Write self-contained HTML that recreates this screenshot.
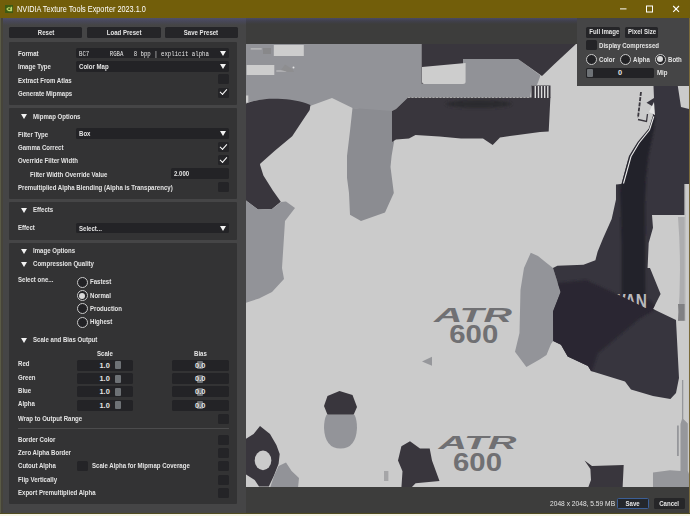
<!DOCTYPE html>
<html><head><meta charset="utf-8"><title>NVIDIA Texture Tools Exporter 2023.1.0</title>
<style>
*{box-sizing:border-box;margin:0;padding:0}
html,body{width:690px;height:516px;overflow:hidden;background:#725e0a}
body{position:relative;font-family:"Liberation Sans",sans-serif;font-size:7.4px;color:#e4e4e4;font-weight:bold}
.abs{position:absolute}
#title{left:0;top:0;width:690px;height:17.500px;background:#725e0a}
#title .t{left:17.200px;top:4.200px;font-size:8.6px;font-weight:normal;color:#fff;line-height:11px;white-space:nowrap;transform:scaleX(.85);transform-origin:0 50%}
#left{left:1px;top:17.500px;width:245px;height:497px;background:linear-gradient(#505068,#48485a 3px,#454546 7px)}
#right{left:246px;top:17.500px;width:444px;height:497px;background:linear-gradient(#4a4a62,#40404c 3px,#3d3d3c 6px)}
.panel{background:#333334;left:9.200px;width:228px;border-radius:1px}
.btn{background:#252528;border-radius:1.5px;text-align:center;line-height:11px;height:11px;top:27px;white-space:nowrap}
.lbl{white-space:nowrap;line-height:10px;height:10px;margin-top:-4.500px;transform:scaleX(.82);transform-origin:0 50%}
.tx{display:inline-block;transform:scaleX(.82);transform-origin:0 50%}
.tc{display:inline-block;transform:scaleX(.82);transform-origin:50% 50%}
.dd{background:#232326;border-radius:1.5px;left:76px;width:153px;height:10.600px;margin-top:-4.800px;line-height:12.200px;padding-left:3px;white-space:nowrap}
.dd.nd:after{display:none}
.dd:after{content:"";position:absolute;right:3.5px;top:3px;border-left:3px solid transparent;border-right:3px solid transparent;border-top:5px solid #f2f2f2}
.cb{background:#242427;border-radius:1.5px;width:11px;height:10px;margin-top:-4.500px;left:218px}
.cb.on:after{content:"";position:absolute;left:2.300px;top:1.800px;width:6px;height:3.200px;border-left:1.800px solid #fff;border-bottom:1.800px solid #fff;transform:rotate(-48deg)}
.tri{width:0;height:0;border-left:3px solid transparent;border-right:3px solid transparent;border-top:5px solid #f2f2f2;left:21px;margin-top:-2px}
.rd{width:11px;height:11px;border-radius:50%;background:#222225;border:1px solid #c9c9c9;margin-top:-5px;margin-left:-.5px}
.rd.on:after{content:"";position:absolute;left:1.500px;top:1.500px;width:6px;height:6px;border-radius:50%;background:#d8d8d8}
.sl{background:#232326;border-radius:1.5px;height:11px;margin-top:-5px;width:56.500px}
.sl i{position:absolute;top:1.500px;width:6px;height:8px;background:#6e7276;border-radius:1px}
.sl b{position:absolute;top:0;line-height:11px;font-weight:bold}
.mono{font-family:"Liberation Mono",monospace;font-weight:normal;font-size:6.800px;transform:scaleX(.838)}
</style></head><body>
<div id="title" class="abs">
 <svg class="abs" style="left:5.300px;top:5.400px" width="8" height="8" viewBox="0 0 9 9"><rect width="9" height="9" fill="#3d5a12"/><path d="M1.5 4.5 C2.5 2.5 5 2.2 6.5 3.2 L6.5 2 L8 2 L8 7 L6.5 7 C4.5 7.5 2.5 6.5 1.5 4.5 Z M3 4.5 C3.8 5.6 5 5.8 6 5.3 L6 3.8 C5 3.3 3.8 3.5 3 4.5Z" fill="#b9d66a" fill-rule="evenodd"/></svg>
 <div class="abs t">NVIDIA Texture Tools Exporter 2023.1.0</div>
 <svg class="abs" style="left:610px;top:0" width="80" height="18" viewBox="0 0 80 18"><path d="M10 8.900h6.500" stroke="#fff" stroke-width="1"/><rect x="36.500" y="6" width="6" height="6" fill="none" stroke="#fff" stroke-width="1"/><path d="M63.200 6l5.800 5.800M69 6l-5.800 5.800" stroke="#fff" stroke-width="1.100"/></svg>
</div>
<div id="left" class="abs"></div>
<div id="right" class="abs"></div>
<!--LEFT-->
<div class="abs btn" style="left:9.2px;width:72.8px"><span class="tc">Reset</span></div>
<div class="abs btn" style="left:87px;width:73.5px"><span class="tc">Load Preset</span></div>
<div class="abs btn" style="left:165px;width:72.69999999999999px"><span class="tc">Save Preset</span></div>
<div class="abs panel" style="top:41.5px;height:63.2px"></div>
<div class="abs lbl" style="left:18px;top:53px">Format</div>
<div class="abs dd" style="top:52.7px"><span class="tx mono">BC7&nbsp;&nbsp;&nbsp;&nbsp;&nbsp;&nbsp;RGBA&nbsp;&nbsp;&nbsp;8 bpp | explicit alpha</span></div>
<div class="abs lbl" style="left:18px;top:66.3px">Image Type</div>
<div class="abs dd" style="top:66.2px"><span class="tx">Color Map</span></div>
<div class="abs lbl" style="left:18px;top:80px">Extract From Atlas</div>
<div class="abs cb" style="left:218px;top:78.4px"></div>
<div class="abs lbl" style="left:18px;top:93.3px">Generate Mipmaps</div>
<div class="abs cb on" style="left:218px;top:92.1px"></div>
<div class="abs panel" style="top:108.3px;height:90.7px"></div>
<div class="abs tri" style="top:116px"></div>
<div class="abs lbl" style="left:33px;top:116px">Mipmap Options</div>
<div class="abs lbl" style="left:18px;top:134px">Filter Type</div>
<div class="abs dd" style="top:133.2px"><span class="tx">Box</span></div>
<div class="abs lbl" style="left:18px;top:147.3px">Gamma Correct</div>
<div class="abs cb on" style="left:218px;top:146.5px"></div>
<div class="abs lbl" style="left:18px;top:160.7px">Override Filter Width</div>
<div class="abs cb on" style="left:218px;top:159.9px"></div>
<div class="abs lbl" style="left:30px;top:174.2px">Filter Width Override Value</div>
<div class="abs dd nd" style="left:170.500px;width:58.5px;top:172.9px"><span class="tx">2.000</span></div>
<div class="abs lbl" style="left:18px;top:187px">Premultiplied Alpha Blending (Alpha is Transparency)</div>
<div class="abs cb" style="left:218px;top:186.2px"></div>
<div class="abs panel" style="top:202px;height:38px"></div>
<div class="abs tri" style="top:209.7px"></div>
<div class="abs lbl" style="left:33px;top:209.7px">Effects</div>
<div class="abs lbl" style="left:18px;top:227px">Effect</div>
<div class="abs dd" style="top:227.3px"><span class="tx">Select...</span></div>
<div class="abs panel" style="top:243px;height:260.5px"></div>
<div class="abs tri" style="top:250.6px"></div>
<div class="abs lbl" style="left:33px;top:250.6px">Image Options</div>
<div class="abs tri" style="top:263.8px"></div>
<div class="abs lbl" style="left:33px;top:263.8px">Compression Quality</div>
<div class="abs lbl" style="left:18px;top:279.8px">Select one...</div>
<div class="abs rd" style="left:77px;top:281.5px"></div>
<div class="abs lbl" style="left:90px;top:281.5px">Fastest</div>
<div class="abs rd on" style="left:77px;top:295px"></div>
<div class="abs lbl" style="left:90px;top:295px">Normal</div>
<div class="abs rd" style="left:77px;top:308.2px"></div>
<div class="abs lbl" style="left:90px;top:308.2px">Production</div>
<div class="abs rd" style="left:77px;top:321.7px"></div>
<div class="abs lbl" style="left:90px;top:321.7px">Highest</div>
<div class="abs tri" style="top:339.8px"></div>
<div class="abs lbl" style="left:33px;top:339.8px">Scale and Bias Output</div>
<div class="abs lbl" style="left:96.9px;top:353.8px">Scale</div>
<div class="abs lbl" style="left:194.4px;top:353.8px">Bias</div>
<div class="abs lbl" style="left:18px;top:363.8px">Red</div>
<div class="abs sl" style="left:76.5px;top:364.8px"><i style="left:38px"></i><b style="left:23px">1.0</b></div>
<div class="abs sl" style="left:172.3px;top:364.8px"><i style="left:25px"></i><b style="left:22.8px">0.0</b></div>
<div class="abs lbl" style="left:18px;top:377px">Green</div>
<div class="abs sl" style="left:76.5px;top:378px"><i style="left:38px"></i><b style="left:23px">1.0</b></div>
<div class="abs sl" style="left:172.3px;top:378px"><i style="left:25px"></i><b style="left:22.8px">0.0</b></div>
<div class="abs lbl" style="left:18px;top:390.3px">Blue</div>
<div class="abs sl" style="left:76.5px;top:391.3px"><i style="left:38px"></i><b style="left:23px">1.0</b></div>
<div class="abs sl" style="left:172.3px;top:391.3px"><i style="left:25px"></i><b style="left:22.8px">0.0</b></div>
<div class="abs lbl" style="left:18px;top:403.5px">Alpha</div>
<div class="abs sl" style="left:76.5px;top:404.5px"><i style="left:38px"></i><b style="left:23px">1.0</b></div>
<div class="abs sl" style="left:172.3px;top:404.5px"><i style="left:25px"></i><b style="left:22.8px">0.0</b></div>
<div class="abs lbl" style="left:18px;top:418.4px">Wrap to Output Range</div>
<div class="abs cb" style="left:218px;top:418.4px"></div>
<div class="abs" style="left:18px;top:428px;width:211px;height:1px;background:#4c4c4d"></div>
<div class="abs lbl" style="left:18px;top:439px">Border Color</div>
<div class="abs cb" style="left:218px;top:439px"></div>
<div class="abs lbl" style="left:18px;top:452.4px">Zero Alpha Border</div>
<div class="abs cb" style="left:218px;top:452.4px"></div>
<div class="abs lbl" style="left:18px;top:465.6px">Cutout Alpha</div>
<div class="abs cb" style="left:76.5px;top:465.6px"></div>
<div class="abs lbl" style="left:92.3px;top:465.6px">Scale Alpha for Mipmap Coverage</div>
<div class="abs cb" style="left:218px;top:465.6px"></div>
<div class="abs lbl" style="left:18px;top:479px">Flip Vertically</div>
<div class="abs cb" style="left:218px;top:479px"></div>
<div class="abs lbl" style="left:18px;top:492.6px">Export Premultiplied Alpha</div>
<div class="abs cb" style="left:218px;top:492.6px"></div>
<!--/LEFT-->
<!--IMG-->
<svg class="abs" style="left:246.400px;top:44.300px" width="442.400" height="443.200" viewBox="0 0 442.400 443.200">
<defs><filter id="bl" x="-20%" y="-50%" width="140%" height="200%"><feGaussianBlur stdDeviation="1.5"/></filter><clipPath id="tri"><path d="M370,249.500H401.500V265Z"/></clipPath><filter id="bl2" x="-20%" y="-20%" width="140%" height="140%"><feGaussianBlur stdDeviation="1.2"/></filter><clipPath id="d4c"><path d="M407,30L408,54L400.500,58.700L406,62L407,71.700L402.700,84.800L391.800,97.800L383,112L375.500,140L370,140.500V155.500L365.700,175L357,194.600L351.600,207.700L349.400,216.300L337.500,220.700L311.400,221.800L307,224L314.600,248L307,267.500L307.200,297L315,300.700L321.700,312.400L342,322L345,327L379,337.600L385,345.500L407,352L424.400,355L430,349L433,334L430,276L407,265L414.600,250L404,224H401.600L402.700,199L407,183.700L406,171H438.500V140H443V65L435,63L430,30Z"/></clipPath></defs>
<rect width="443" height="444" fill="#cbcbcb"/>
<!-- top-left mid grey -->
<path d="M0,0H175.600V53.500H162L150,65L146,67V70L106.500,64L86,54L64,62Q32,50 0,58.700Z" fill="#929398"/>
<path d="M175,40H217V15H272L294.500,31.500L291,41H286L284,53.500H175Z" fill="#919297"/>
<!-- band -->
<path d="M106.500,64L146,67L148,98L145.600,112L144.500,123L147.800,149L139,168.500L115,177L104,170.700L103,149L101,133.700V112L104,87Z" fill="#8b8c91"/>
<!-- small details top-left -->
<rect x="27.800" y="1" width="30" height="11" fill="#cdcdcd"/>
<rect x="0.600" y="21" width="27.700" height="10" fill="#cdcdcd"/>
<rect x="17" y="4" width="8" height="6" fill="#88888a"/>
<rect x="30.300" y="26.500" width="10" height="1" fill="#c8c8c8"/><rect x="4.700" y="4.300" width="11" height="1.200" fill="#c0c0c0"/><path d="M35,26L39,20.500L47,25.500L48,28H42Z" fill="#8e8e90"/><circle cx="47.500" cy="23.500" r="1" fill="#e0e0e0"/><rect x="0" y="51.500" width="2.300" height="7" fill="#cdcdcd"/>
<!-- dark arc -->
<path d="M0,59.500C10,55.500 21,54.500 32,54.800S55,57 64.400,61L63.700,66L57.800,74.800L46.200,92.200L28.800,106.700L14.200,119.800L14,120.700L17.400,131.600L27,146.800L34.800,157.700L26,165L12,165.500L0,156.500Z" fill="#39363d"/>
<!-- left mid-grey shape -->
<path d="M0,156.500L12,165.500L26,165L35,158L40,157.600L49,164L39,177L36,224L38,235L26,248L13,254.400L0,258.800Z" fill="#929398"/>
<!-- dark top -->
<path d="M175.600,0H330L308,20.600L296,32L272,15H217V40H175.600Z" fill="#39363d"/>
<path d="M176,23L219.600,19V38Q219.600,40 217,40H178Q176,40 176,38Z" fill="#cdcdcd"/>
<!-- dark band -->
<path d="M162,53.500H304.400L302.700,87.500L294,88L271.700,91L254,93.500L246.700,101L237,94.500H215L193.500,92.400L169.500,91L163,94.500L150,95.600L146,98V67L150,65Z" fill="#39363d"/>
<ellipse cx="232.600" cy="60" rx="33" ry="4" fill="#2b2a2f" filter="url(#bl)"/>
<path d="M162,53.500H283" stroke="#b8b8b8" stroke-width="0.800" stroke-dasharray="2 1.500" fill="none"/>
<!-- barcode stripes -->
<rect x="285.500" y="41.500" width="19" height="12.500" fill="#39363d"/><g fill="#dcdcdc"><rect x="288.600" y="42" width="1.400" height="12"/><rect x="291.800" y="42" width="1.400" height="12"/><rect x="294.900" y="42" width="1.400" height="12"/><rect x="298" y="42" width="1.400" height="12"/><rect x="301.100" y="42" width="1.400" height="12"/></g>
<!-- center-right mid grey -->
<path d="M284.800,208.700L292,212L300,218.500L307,224L314.600,248L307,267.500L308,295.700L305,300L300.500,311L294,315.300L280.400,323L269,307.700L273.500,289L274.500,245.700L278,224Z" fill="#939499"/>
<!-- big dark right -->
<path d="M407,30L408,54L400.500,58.700L406,62L407,71.700L402.700,84.800L391.800,97.800L383,112L375.500,140L370,140.500V155.500L365.700,175L357,194.600L351.600,207.700L349.400,216.300L337.500,220.700L311.400,221.800L307,224L314.600,248L307,267.500L307.200,297L315,300.700L321.700,312.400L342,322L345,327L379,337.600L385,345.500L407,352L424.400,355L430,349L433,334L430,276L407,265L414.600,250L404,224H401.600L402.700,199L407,183.700L406,171H438.500V140H443V65L435,63L430,30Z" fill="#37353e"/>
<g clip-path="url(#d4c)"><g filter="url(#bl2)"><path d="M407,70L409,74L407.500,88L402.500,111.300L400,134.500L399,161.500L399.500,258H375.600V200L374,140L379.900,120.600L389.200,102L403.100,85.700Z" fill="#24222a"/><path d="M300,240L340,236L375,252L403,256L412,264L393.600,274.600L351.700,309.500L345,330L300,310Z" fill="#2a2831"/></g></g>
<path d="M407.800,72.500L403.500,86L393,99L385,112.500L377.500,139.500" stroke="#ececec" stroke-width="1.100" fill="none"/>
<path d="M395,48L392,74" stroke="#39363d" stroke-width="1.800" stroke-dasharray="4 1.200" fill="none"/>
<path d="M392,75.500L400.500,77.500L401.500,70" stroke="#39363d" stroke-width="1.300" fill="none"/>
<path d="M403,68L408,58L409,71Z" fill="#e4e4e4"/>
<g clip-path="url(#tri)"><text x="365" y="264.300" font-family="'Liberation Sans',sans-serif" font-weight="bold" font-size="20" fill="#b9b9bd" textLength="36" lengthAdjust="spacingAndGlyphs">WAN</text></g>
<path d="M432,173Q436,225 432,276.700H438.800V173Z" fill="#adadaf"/>
<path d="M432,260Q433,268 432,276.700H438.800V260Z" fill="#808083"/>
<path d="M438.800,140h1v137h-1z" fill="#bdbdbd"/>
<!-- ATR text -->
<g fill="#707073" font-family="'Liberation Sans',sans-serif" font-weight="bold">
<text x="188" y="278.300" font-size="19.500" font-style="italic" textLength="78" lengthAdjust="spacingAndGlyphs">ATR</text>
<text x="203.300" y="299" font-size="25.800" textLength="49" lengthAdjust="spacingAndGlyphs">600</text>
<text x="192.400" y="405.300" font-size="18.500" font-style="italic" textLength="78" lengthAdjust="spacingAndGlyphs">ATR</text>
<text x="207" y="427" font-size="26.500" textLength="49" lengthAdjust="spacingAndGlyphs">600</text>
</g>
<path d="M176,317.500L186,312.700V321.800Z" fill="#96979b"/>
<!-- bottom row -->
<path d="M78,362L81.500,352L93.500,347L106.500,351L111,363L107.600,370.800H81.500Z" fill="#39363d"/>
<path d="M80.500,370.800H108.500Q111,376 111,384Q110,404.500 94.500,404.500Q79,404.500 78,384Q78,376 80.500,370.800Z" fill="#939499"/>
<path d="M0,394.700L7.600,390L14,382L24,390L30.400,401L33.700,410L32.600,419.700L28,431.600L22.800,442.500H13L8.700,436L0,430.500Z" fill="#39363d"/>
<ellipse cx="17" cy="416.400" rx="8.300" ry="9.800" fill="#cbcbcb"/>
<path d="M32.600,422L40,418.600L45.600,427L53,434L52,444H24L28,432Z" fill="#929398"/>
<rect x="138" y="427" width="4.400" height="10" fill="#a5a5a7"/>
<path d="M152,416.400L155.400,402.300L164,397.300L174,404.500H183.700L186,416.400L193.500,437L169.600,439.300L165,444H155.400L156.500,427.300Z" fill="#39363d"/>
<path d="M338.600,416.400L346,422L377.700,421L376.600,444H342L345,436L344.400,425Z" fill="#39363d"/>
<!-- antenna -->
<path d="M436,336H437.300V375L441.800,379.500V427L443,430V444H407V428.500L424,426.300L434.500,427V412H432.800V381.600H431V412H434.500V380L436,375Z" fill="#96979b"/>
</svg>
<!--/IMG-->
<!--OVL-->
<div class="abs" style="left:577px;top:18px;width:113px;height:68px;background:#454546"></div>
<div class="abs btn" style="left:585.700px;width:34.500px;top:27px;height:10.500px;line-height:10.500px"><span class="tc">Full Image</span></div>
<div class="abs btn" style="left:625px;width:32.500px;top:27px;height:10.500px;line-height:10.500px"><span class="tc">Pixel Size</span></div>
<div class="abs cb" style="left:586px;top:44.700px;width:10.700px;height:10.300px"></div>
<div class="abs lbl" style="left:599px;top:45.800px">Display Compressed</div>
<div class="abs rd" style="left:586.800px;top:58.700px"></div><div class="abs lbl" style="left:599px;top:59.200px">Color</div>
<div class="abs rd" style="left:620.200px;top:58.700px"></div><div class="abs lbl" style="left:632.500px;top:59.200px">Alpha</div>
<div class="abs rd on" style="left:655.200px;top:58.700px"></div><div class="abs lbl" style="left:667.500px;top:59.200px">Both</div>
<div class="abs sl" style="left:586px;top:72.500px;width:68.300px;height:10px"><i style="left:1px;width:5.500px"></i><b style="left:32px;line-height:10px">0</b></div>
<div class="abs lbl" style="left:656.700px;top:72.500px">Mip</div>
<!-- bottom bar -->
<div class="abs lbl" style="left:549.700px;top:503.400px;font-weight:normal;transform:scaleX(.9)">2048 x 2048, 5.59 MB</div>
<div class="abs btn" style="left:617px;width:32px;top:497.500px;height:11.500px;line-height:10px;border:1px solid #3c5f96;background:#24272c"><span class="tc">Save</span></div>
<div class="abs btn" style="left:653.500px;width:31.300px;top:497.500px;height:11.500px;line-height:11.500px;background:#262628"><span class="tc">Cancel</span></div>
<!-- frame -->
<div class="abs" style="left:0;top:17.500px;width:1px;height:496px;background:#5a5a46"></div>
<div class="abs" style="left:1px;top:17.500px;width:1.500px;height:496px;background:#46443a"></div>
<div class="abs" style="left:688.800px;top:17.500px;width:1.200px;height:496px;background:#7a6a3a"></div>
<div class="abs" style="left:0;top:512.500px;width:690px;height:1px;background:#4e4a20"></div>
<div class="abs" style="left:0;top:513.500px;width:690px;height:2.500px;background:#f7f6ea"></div>
<!--/OVL-->
</body></html>
